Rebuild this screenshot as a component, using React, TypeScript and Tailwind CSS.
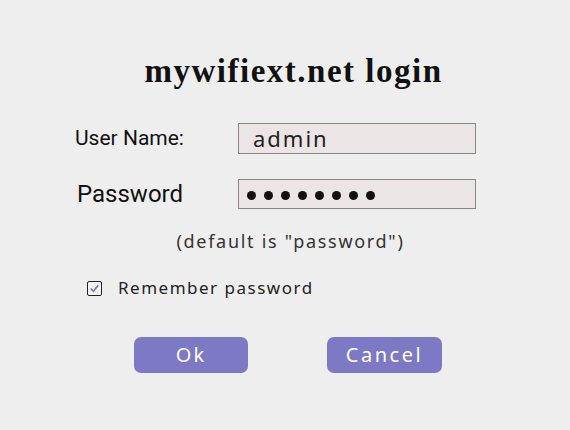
import React, { useState } from 'react';

const App = () => {
  const [remember, setRemember] = useState(true);

  return (
    <div className="w-[570px] h-[430px] bg-[#efeeee] flex flex-col">
      <h1 className="mt-[51px] text-center pl-[17px] text-[33px] leading-[40px] tracking-[1.5px] font-bold text-[#111] font-['Liberation_Serif',serif]">
        mywifiext.net login
      </h1>

      <div className="mt-[32px] flex flex-col gap-[25px] pl-[75px] font-['Roboto',sans-serif] text-[#111]">
        <div className="flex items-center h-[31px]">
          <label className="w-[163px] text-[21px] leading-[31px]">User Name:</label>
          <div className="w-[238px] h-[31px] border border-[#8a8686] bg-[#ece5e5] flex items-center pl-[14px] text-[22px] tracking-[2px] text-[#222] font-['Noto_Sans',sans-serif]">
            admin
          </div>
        </div>
        <div className="flex items-center h-[30px]">
          <label className="w-[163px] pl-[2px] text-[24px] leading-[30px]">Password</label>
          <div className="w-[238px] h-[30px] border border-[#8a8686] bg-[#ece5e5] flex items-center gap-[8px] pl-[8px] pt-[3px]">
            {Array.from({ length: 8 }).map((_, i) => (
              <span key={i} className="w-[9px] h-[9px] rounded-full bg-[#111]" />
            ))}
          </div>
        </div>
      </div>

      <p className="mt-[20px] text-center pl-[11px] text-[18px] leading-[24px] tracking-[1.7px] text-[#333] font-['Noto_Sans',sans-serif]">
        (default is "password")
      </p>

      <label className="mt-[23px] ml-[87px] flex items-center gap-[16px] text-[17px] leading-[24px] tracking-[1.5px] text-[#222] font-['Noto_Sans',sans-serif]">
        <span
          onClick={() => setRemember(!remember)}
          className="w-[15px] h-[15px] border-[1.5px] border-[#222] rounded-[2px] flex items-center justify-center bg-[#f4f4f4]"
        >
          {remember && (
            <svg width="11" height="11" viewBox="0 0 10 10">
              <path d="M1.5 5 L4 7.5 L8.5 2" fill="none" stroke="#7b73c0" strokeWidth="1.6" />
            </svg>
          )}
        </span>
        Remember password
      </label>

      <div className="mt-[37px] flex gap-[79px] pl-[134px] font-['Noto_Sans',sans-serif]">
        <button className="w-[114px] h-[36px] rounded-[7px] bg-[#7d79c5] text-white text-[20px] tracking-[2px]">
          Ok
        </button>
        <button className="w-[115px] h-[36px] rounded-[7px] bg-[#7d79c5] text-white text-[20px] tracking-[2.5px]">
          Cancel
        </button>
      </div>
    </div>
  );
};

export default App;
